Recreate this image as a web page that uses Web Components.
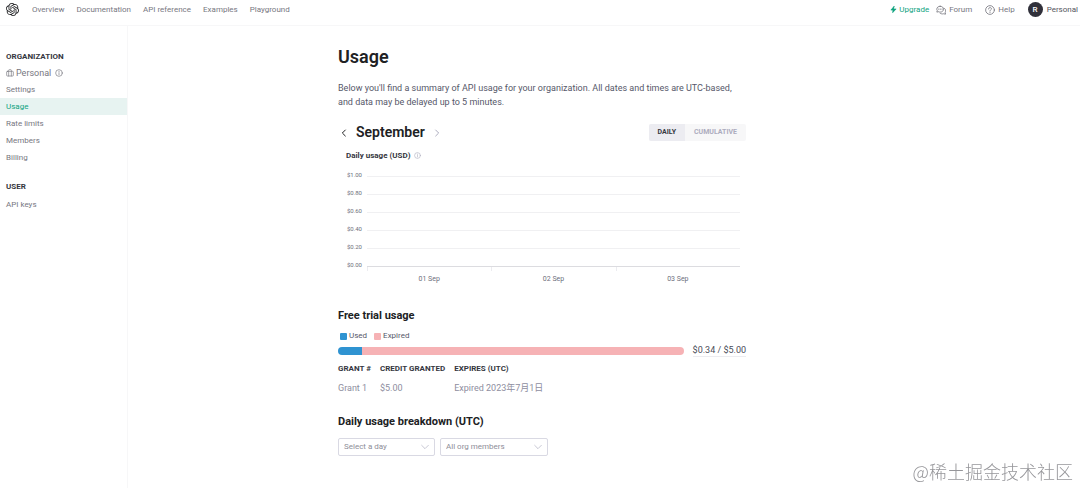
<!DOCTYPE html>
<html lang="en">
<head>
<meta charset="utf-8">
<meta name="viewport" content="width=device-width, initial-scale=1">
<title>Usage</title>
<style>
    html, body {height: 100%;}
    body {margin: 0; background: #fff; color: #202123; font: 8px/10px Roboto, "Noto Sans CJK SC", sans-serif;}
</style>
</head>
<body>
<usage-app></usage-app>

<script>
const icons = {
    logo: `<path fill="currentColor" d="M22.2819 9.8211a5.9847 5.9847 0 0 0-.5157-4.9108 6.0462 6.0462 0 0 0-6.5098-2.9A6.0651 6.0651 0 0 0 4.9807 4.1818a5.9847 5.9847 0 0 0-3.9977 2.9 6.0462 6.0462 0 0 0 .7427 7.0966 5.98 5.98 0 0 0 .511 4.9107 6.051 6.051 0 0 0 6.5146 2.9001A5.9847 5.9847 0 0 0 13.2599 24a6.0557 6.0557 0 0 0 5.7718-4.2058 5.9894 5.9894 0 0 0 3.9977-2.9001 6.0557 6.0557 0 0 0-.7475-7.0729zm-9.022 12.6081a4.4755 4.4755 0 0 1-2.8764-1.0408l.1419-.0804 4.7783-2.7582a.7948.7948 0 0 0 .3927-.6813v-6.7369l2.02 1.1686a.071.071 0 0 1 .038.052v5.5826a4.504 4.504 0 0 1-4.4945 4.4944zm-9.6607-4.1254a4.4708 4.4708 0 0 1-.5346-3.0137l.142.0852 4.783 2.7582a.7712.7712 0 0 0 .7806 0l5.8428-3.3685v2.3324a.0804.0804 0 0 1-.0332.0615L9.74 19.9502a4.4992 4.4992 0 0 1-6.1408-1.6464zM2.3408 7.8956a4.485 4.485 0 0 1 2.3655-1.9728V11.6a.7664.7664 0 0 0 .3879.6765l5.8144 3.3543-2.0201 1.1685a.0757.0757 0 0 1-.071 0l-4.8303-2.7865A4.504 4.504 0 0 1 2.3408 7.872zm16.5963 3.8558L13.1038 8.364 15.1192 7.2a.0757.0757 0 0 1 .071 0l4.8303 2.7913a4.4944 4.4944 0 0 1-.6765 8.1042v-5.6772a.79.79 0 0 0-.407-.667zm2.0107-3.0231l-.142-.0852-4.7735-2.7818a.7759.7759 0 0 0-.7854 0L9.409 9.2297V6.8974a.0662.0662 0 0 1 .0284-.0615l4.8303-2.7866a4.4992 4.4992 0 0 1 6.6802 4.66zM8.3065 12.863l-2.02-1.1638a.0804.0804 0 0 1-.038-.0567V6.0742a4.4992 4.4992 0 0 1 7.3757-3.4537l-.142.0805L8.704 5.459a.7948.7948 0 0 0-.3927.6813zm1.0976-2.3654l2.602-1.4998 2.6069 1.4998v2.9994l-2.5974 1.4997-2.6067-1.4997Z"/>`,
    bolt: `<path fill="currentColor" d="M14 1 3 14h7l-1 9 12-13h-8z"/>`,
    chat: `<path d="M10 3c5 0 8 3 8 7s-3 7-8 7c-1 0-2 0-3-1l-5 1 1-4c-1-1-1-2-1-3 0-4 3-7 8-7zM20 8c2 1 3 3 3 6 0 1 0 3-1 4l1 4-5-1c-3 1-6 0-8-1"/><path d="M6 10h1M10 10h1M14 10h1"/>`,
    help: `<circle cx="12" cy="12" r="10.5"/><path d="M8.500 9.500c0-5 7-4 7-.5 0 2.500-3.500 2.500-3.500 5M12 17v1"/>`,
    info: `<circle cx="12" cy="12" r="10"/><path d="M12 11v6M12 7v1"/>`,
    briefcase: `<rect x="2" y="7" width="20" height="14" rx="2"/><path d="M8 21V4a2 2 0 0 1 2-2h4a2 2 0 0 1 2 2v17"/>`,
    left: `<path d="M16 3 7 12l9 9"/>`,
    right: `<path d="m8 3 9 9-9 9"/>`,
    down: `<path d="m2 7 10 10L22 7"/>`
};

// Attaches an open root and fills it from a template
function render(host, html) {
    const template = document.createElement('template');
    template.innerHTML = html;
    host.attachShadow({mode: 'open'}).appendChild(template.content.cloneNode(true));
}

class UiIcon extends HTMLElement {
    connectedCallback() {
        if (this.shadowRoot) return;
        render(this, `
            <style>
            :host {display: block; flex: none; width: 8px; height: 8px;}
            svg {display: block; width: 100%; height: 100%; fill: none; stroke-width: var(--stroke, 2); stroke-linecap: round; stroke-linejoin: round;}
            </style>
            <svg viewBox="0 0 24 24" stroke="${this.getAttribute("name") == "logo" ? "none" : "currentColor"}" aria-hidden="true">${icons[this.getAttribute("name")]}</svg>
        `);
    }
}

class TopBar extends HTMLElement {
    constructor() {
        super();
        render(this, `
            <style>
            :host {display: block; border-bottom: 1px solid #f7f7f8;}
            header {display: flex; align-items: center; justify-content: space-between; height: 19px; padding: 0 2px 6px 6px;}
            nav, .account {display: flex; align-items: center;}
            nav {gap: 12px;}
            a {display: flex; align-items: center; gap: 3px; color: #77777f; text-decoration: none;}
            .logo {margin-right: 1px; color: #202123;}
            .logo ui-icon {width: 13px; height: 13px;}
            .account {gap: 7px;}
            .account ui-icon {width: 10px; height: 10px;}
            .account .upgrade {color: #10a37f; gap: 2px;}
            .account .upgrade ui-icon {width: 7px; height: 7px;}
            .help {margin: 0 6px;}
            .user {gap: 4px; color: #555560;}
            .avatar {display: grid; place-items: center; width: 15px; height: 15px; border-radius: 50%; background: #30303a; color: #fff; font-weight: 500;}
            </style>
            <header>
                <nav>
                    <a class="logo" href="#" aria-label="Home"><ui-icon name="logo"></ui-icon></a>
                    <a href="#overview">Overview</a>
                    <a href="#docs">Documentation</a>
                    <a href="#api">API reference</a>
                    <a href="#examples">Examples</a>
                    <a href="#playground">Playground</a>
                </nav>
                <div class="account">
                    <a class="upgrade" href="#upgrade"><ui-icon name="bolt"></ui-icon>Upgrade</a>
                    <a href="#forum"><ui-icon name="chat"></ui-icon>Forum</a>
                    <a class="help" href="#help"><ui-icon name="help"></ui-icon>Help</a>
                    <a class="user" href="#account"><span class="avatar">R</span>Personal</a>
                </div>
            </header>
        `);
    }
}

class SideMenu extends HTMLElement {
    constructor() {
        super();
        render(this, `
            <style>
            :host {display: block; border-right: 1px solid #f7f7f8; color: #77777f;}
            nav {padding-top: 22px;}
            h2 {margin: 0; padding: 0 6px; font-size: 8px; line-height: 17px; font-weight: 700; color: #353740;}
            .org {display: flex; align-items: center; gap: 2px; padding: 0 6px; font-size: 9px; line-height: 16px;}
            .org ui-icon:last-child {margin-left: 2px;}
            a {display: block; padding: 0 6px; line-height: 17px; color: inherit; text-decoration: none;}
            a.active {background: #e7f3f1; color: #10a37f;}
            .user {margin-top: 12px;}
            .user + a {margin-top: 1px;}
            </style>
            <nav>
                <h2>ORGANIZATION</h2>
                <div class="org"><ui-icon name="briefcase"></ui-icon>Personal<ui-icon name="info"></ui-icon></div>
                <a href="#settings">Settings</a>
                <a class="active" href="#usage" aria-current="page">Usage</a>
                <a href="#limits">Rate limits</a>
                <a href="#members">Members</a>
                <a href="#billing">Billing</a>
                <h2 class="user">USER</h2>
                <a href="#keys">API keys</a>
            </nav>
        `);
    }
}

class MonthPicker extends HTMLElement {
    constructor() {
        super();
        render(this, `
            <style>
            :host {display: flex; align-items: center; justify-content: space-between;}
            button {padding: 0; border: 0; background: none; color: inherit; font: inherit; cursor: pointer;}
            .month, .modes {display: flex; align-items: center;}
            .month {gap: 8px; padding-left: 2px;}
            .month ui-icon {--stroke: 3;}
            .month button:disabled {color: #acacbe;}
            h2 {margin: 0; font-size: 14px; line-height: 17px; font-weight: 600;}
            .modes {border-radius: 2px; overflow: hidden; background: #f7f7f8; font-size: 7px; font-weight: 700; color: #acacbe;}
            .modes button {padding: 0 9px; line-height: 17px;}
            .modes .on {background: #ececf1; color: #353740;}
            </style>
            <div class="month">
                <button aria-label="Previous month"><ui-icon name="left"></ui-icon></button>
                <h2>September</h2>
                <button aria-label="Next month" disabled><ui-icon name="right"></ui-icon></button>
            </div>
            <div class="modes">
                <button class="on" aria-pressed="true">DAILY</button>
                <button aria-pressed="false">CUMULATIVE</button>
            </div>
        `);
        const buttons = this.shadowRoot.querySelectorAll(".modes button");
        buttons.forEach(button => button.addEventListener("click", () => {
            buttons.forEach(b => {
                b.classList.toggle("on", b == button);
                b.setAttribute("aria-pressed", b == button);
            });
        }));
    }
}

class UsageChart extends HTMLElement {
    constructor() {
        super();
        const steps = ["$1.00", "$0.80", "$0.60", "$0.40", "$0.20", "$0.00"];
        const days = ["01 Sep", "02 Sep", "03 Sep"];
        render(this, `
            <style>
            :host {display: block; padding: 0 6px 0 8px; color: #6e6f7c;}
            h3 {display: flex; align-items: center; gap: 4px; margin: 0 0 9px; font-size: 8px; line-height: 13px; font-weight: 700; color: #353740;}
            h3 ui-icon {width: 7px; height: 7px; color: #acacbe;}
            .step {display: grid; grid-template-columns: 16px 1fr; gap: 5px; height: 18px; font-size: 6px; line-height: 8px;}
            .step span {text-align: right; white-space: nowrap;}
            .step i {height: 1px; margin-top: 5px; background: #f0f0f2;}
            .step:last-of-type {height: 6px;}
            .step:last-of-type i {background: #dcdce0;}
            .days {display: grid; grid-template-columns: repeat(3, 1fr); margin-left: 21px; font-size: 7px; line-height: 8px; text-align: center;}
            .days span {padding-top: 8px; background: linear-gradient(#ececf0, #ececf0) left top / 1px 4px no-repeat;}
            </style>
            <h3>Daily usage (USD) <ui-icon name="info"></ui-icon></h3>
            <section>${steps.map(s => `<div class="step"><span>${s}</span><i></i></div>`).join("")}</section>
            <div class="days">${days.map(d => `<span>${d}</span>`).join("")}</div>
        `);
    }
}

class TrialUsage extends HTMLElement {
    constructor() {
        super();
        render(this, `
            <style>
            :host {display: block;}
            h2 {margin: 0; font-size: 11px; line-height: 14px; font-weight: 700;}
            .legend {display: flex; gap: 7px; margin-top: 8px; padding-left: 2px; color: #565869;}
            .legend span {display: flex; align-items: center; gap: 2px;}
            .legend i {width: 7px; height: 7px; border-radius: 1px; background: #f6b2b5;}
            .legend .used {background: #2f93d1;}
            .meter {display: flex; align-items: center; gap: 9px; margin-top: 3px; font-size: 9px; line-height: 12px; color: #4a4b58;}
            .track {flex: 1; height: 8px; border-radius: 4px; background: linear-gradient(90deg, #2f93d1 7%, #f6b2b5 7%);}
            .amount {border-bottom: 1px solid #ececf0;}
            table {margin-top: 7px; border-collapse: collapse; text-align: left;}
            th, td {padding: 0 9px 0 0;}
            th {font-size: 8px; line-height: 10px; font-weight: 700; color: #353740;}
            td {padding-top: 8px; font-size: 9px; line-height: 12px; color: #8e8ea0;}
            </style>
            <h2>Free trial usage</h2>
            <div class="legend"><span><i class="used"></i>Used</span><span><i></i>Expired</span></div>
            <div class="meter"><div class="track"></div><span class="amount">$0.34 / $5.00</span></div>
            <table>
                <thead><tr><th>GRANT #</th><th>CREDIT GRANTED</th><th>EXPIRES (UTC)</th></tr></thead>
                <tbody><tr><td>Grant 1</td><td>$5.00</td><td>Expired 2023年7月1日</td></tr></tbody>
            </table>
        `);
    }
}

class SelectBox extends HTMLElement {
    connectedCallback() {
        if (this.shadowRoot) return;
        render(this, `
            <style>
            :host {display: block;}
            label {display: grid; align-items: center;}
            select, ui-icon {grid-area: 1 / 1;}
            select {appearance: none; width: 100%; height: 18px; margin: 0; padding: 0 16px 0 5px; border: 1px solid #d9d9e3; border-radius: 2px; background: #fff; color: #8e8e98; font: inherit;}
            ui-icon {justify-self: end; margin-right: 6px; color: #acacbe; pointer-events: none;}
            </style>
            <label>
                <select aria-label="${this.getAttribute("label")}"><option>${this.getAttribute("value")}</option></select>
                <ui-icon name="down"></ui-icon>
            </label>
        `);
    }
}

class UsageApp extends HTMLElement {
    constructor() {
        super();
        render(this, `
            <style>
            :host {display: flex; flex-direction: column; min-height: 100%;}
            .body {flex: 1; display: grid; grid-template-columns: 128px minmax(0, 1fr);}
            main {max-width: 408px; padding: 19px 20px 20px 210px;}
            h1 {margin: 0; font-size: 18px; line-height: 24px; font-weight: 600;}
            p {margin: 12px 0 15px; font-size: 9px; line-height: 14px; color: #565869;}
            usage-chart {margin-top: 8px;}
            trial-usage {margin-top: 26px;}
            h2 {margin: 21px 0 9px; font-size: 11px; line-height: 14px; font-weight: 700;}
            .filters {display: grid; grid-template-columns: 97px 108px; gap: 5px;}
            .mark {position: fixed; right: 7px; bottom: 5px; color: #96969a; font: 300 18px/24px "Noto Sans CJK SC", sans-serif;}
            </style>
            <top-bar></top-bar>
            <div class="body">
                <side-menu></side-menu>
                <main>
                    <h1>Usage</h1>
                    <p>Below you'll find a summary of API usage for your organization. All dates and times are UTC-based, and data may be delayed up to 5 minutes.</p>
                    <month-picker></month-picker>
                    <usage-chart></usage-chart>
                    <trial-usage></trial-usage>
                    <h2>Daily usage breakdown (UTC)</h2>
                    <div class="filters">
                        <select-box label="Day" value="Select a day"></select-box>
                        <select-box label="Members" value="All org members"></select-box>
                    </div>
                </main>
            </div>
            <div class="mark" lang="zh-CN">@稀土掘金技术社区</div>
        `);
    }
}

window.customElements.define('ui-icon', UiIcon);
window.customElements.define('top-bar', TopBar);
window.customElements.define('side-menu', SideMenu);
window.customElements.define('month-picker', MonthPicker);
window.customElements.define('usage-chart', UsageChart);
window.customElements.define('trial-usage', TrialUsage);
window.customElements.define('select-box', SelectBox);
window.customElements.define('usage-app', UsageApp);
</script>
</body>
</html>
